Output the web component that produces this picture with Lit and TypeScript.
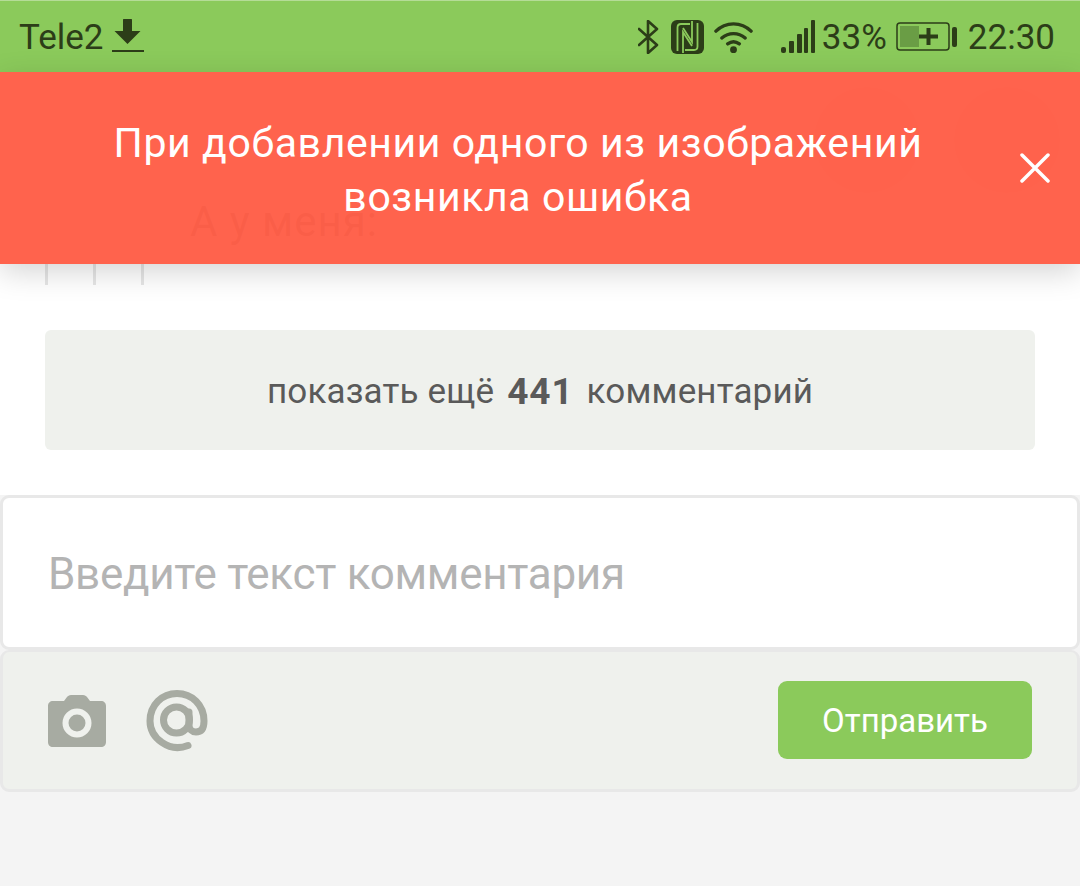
import { LitElement, html, css } from "lit";
import { customElement } from "lit/decorators.js";

@customElement("app-root")
export class AppRoot extends LitElement {
  static styles = css`
    :host { display: block; width: 1080px; height: 886px; position: relative; overflow: hidden; background: #f4f4f4; font-family: Roboto, "Noto Sans", sans-serif; }
    .status { height: 72px; box-sizing: border-box; background: #8bca5b; border-top: 1px solid #b5dc97; display: flex; align-items: center; padding: 1px 25px 0 19px; color: #2c3d18; font-size: 35px; }
    .status svg { display: block; flex: none; }
    .tele { margin-right: 7px; }
    .spacer { flex: 1; }
    .icons { display: flex; align-items: center; }
    .bt { margin-right: 12px; }
    .nfc { margin-right: 10px; }
    .wifi { margin-right: 28px; }
    .signal { margin-right: 7px; }
    .pct { margin-right: 9px; }
    .batt { margin-right: 11px; }
    .main { background: #fff; height: 423px; box-sizing: border-box; padding: 0 45px; display: flex; flex-direction: column; }
    .top { height: 192px; display: flex; align-items: flex-end; justify-content: space-between; }
    .who { margin-left: 145px; margin-bottom: 18px; font-size: 42px; letter-spacing: 1px; color: #333; }
    .avatars { display: flex; gap: 34px; align-self: flex-start; margin-top: 15px; margin-right: -25px; }
    .circle { width: 106px; height: 106px; border-radius: 50%; background: #d0b0a8; opacity: .5; }
    .ticks { display: flex; gap: 45px; height: 21px; }
    .ticks i { width: 3px; background: #e6e6e6; }
    .more { margin-top: 45px; height: 120px; box-sizing: border-box; padding-top: 2px; border-radius: 6px; background: #eff1ed; display: flex; align-items: center; justify-content: center; font-size: 35px; color: #5a5a5a; letter-spacing: .15px; }
    .more b { margin: 0 13px; font-weight: 700; font-size: 37px; letter-spacing: .9px; }
    .input { height: 155px; box-sizing: border-box; padding: 2px 0 0 45px; background: #fff; border: 3px solid #e8e8e8; border-radius: 9px; display: flex; align-items: center; font-size: 44px; color: #b4b4b4; letter-spacing: -.3px; }
    .tools { height: 142px; box-sizing: border-box; background: #eff1ed; border: 3px solid #e8e8e8; border-top-width: 2px; border-radius: 9px; display: flex; align-items: center; padding: 0 45px; }
    .tools svg { display: block; }
    .camera { margin-right: 40px; }
    .send { margin-left: auto; width: 254px; height: 78px; border-radius: 9px; background: #8bca5b; color: #fff; display: flex; align-items: center; justify-content: center; font-size: 33px; margin-top: -1px; }
    .banner { position: absolute; left: 0; right: 0; top: 72px; height: 192px; background: rgba(255, 95, 73, .975); box-shadow: 0 8px 28px rgba(0, 0, 0, .17); color: #fff; display: flex; align-items: center; }
    .msg { width: 1036px; text-align: center; font-size: 41px; line-height: 54px; letter-spacing: .6px; margin-top: 3px; }
    .close { display: block; position: absolute; left: 1020px; top: 81px; }
  `;

  render() {
    return html`
      <div class="status">
        <span class="tele">Tele2</span>
        <svg width="33" height="36" viewBox="0 0 33 36"><path d="M12 1.500a3 3 0 0 1 9 0V12h8.500L16.500 25 3.500 12H12z" fill="#2c3d18"/><rect x="1" y="31" width="32" height="2" fill="#2c3d18"/></svg>
        <span class="spacer"></span>
        <div class="icons">
          <svg class="bt" width="21" height="34" viewBox="0 0 21 34"><path d="M1 9l18 16-9 8V1l9 8L1 25" fill="none" stroke="#2c3d18" stroke-width="2.600" stroke-linejoin="round" stroke-linecap="round"/></svg>
          <svg class="nfc" width="33" height="34" viewBox="0 0 33 34"><rect width="33" height="34" rx="6" fill="#2c3d18"/><g fill="none" stroke="#8bca5b" stroke-width="1.800"><path d="M6.500 31V7.500C6.500 5.500 8 4 10 4h9"/><path d="M26.500 3v23.500c0 2-1.500 3.500-3.500 3.500h-9"/><path d="M12 33V12l9 14"/><path d="M21 1v21l-9-14"/></g></svg>
          <svg class="wifi" width="39" height="34" viewBox="0 0 40 34"><g fill="none" stroke="#2c3d18" stroke-width="3.500" stroke-linecap="round"><path d="M2 11C12 1 28 1 38 11"/><path d="M8 18c7-6 17-6 24 0"/><path d="M14 24c4-3 8-3 12 0"/></g><circle cx="20" cy="30" r="3.500" fill="#2c3d18"/></svg>
          <svg class="signal" width="34" height="34" viewBox="0 0 34 34"><g fill="#2c3d18"><rect x="0" y="27" width="5" height="6" rx="2"/><rect x="8" y="21" width="5" height="12" rx="1"/><rect x="16" y="14" width="5" height="19" rx="1"/><rect x="23" y="8" width="4" height="25" rx="1"/><rect x="30" y="0" width="4" height="33" rx="1"/></g></svg>
          <span class="pct">33%</span>
          <svg class="batt" width="61" height="30" viewBox="0 0 61 30"><rect x="1" y="1" width="52" height="27" rx="3" fill="none" stroke="#2c3d18" stroke-width="1.500"/><rect x="4" y="4" width="19" height="21" fill="#6a9d45"/><path d="M23 12.500h7.500V6h4v6.500H42v4h-7.500V23h-4v-6.500H23z" fill="#2c3d18"/><rect x="56" y="5" width="5" height="20" rx="2" fill="#2c3d18"/></svg>
          <span>22:30</span>
        </div>
      </div>
      <div class="main">
        <div class="top">
          <span class="who">А у меня:</span>
          <div class="avatars"><span class="circle"></span><span class="circle"></span></div>
        </div>
        <div class="ticks"><i></i><i></i><i></i></div>
        <div class="more">показать ещё <b>441</b> комментарий</div>
      </div>
      <div class="input">Введите текст комментария</div>
      <div class="tools">
        <svg class="camera" width="58" height="52" viewBox="0 0 58 52"><path d="M5 6h11l3-4c1-1 2-2 4-2h12c2 0 3 1 4 2l3 4h11c3 0 5 2 5 5v36c0 3-2 5-5 5H5c-3 0-5-2-5-5V11c0-3 2-5 5-5z" fill="#a7aba2"/><circle cx="29" cy="28" r="11.500" fill="none" stroke="#eff1ed" stroke-width="6"/></svg>
        <svg width="62" height="62" viewBox="0 0 62 62"><g fill="none" stroke="#a7aba2" stroke-width="7" stroke-linecap="round"><path d="M42 55.500C23 63 4 48 4 31 4 15 16 3.500 31 3.500S58 15 58 31c0 8-3 11-8 11-4 0-7-3-7-7V22"/><circle cx="30.500" cy="30" r="13"/></g></svg>
        <div class="send">Отправить</div>
      </div>
      <div class="banner">
        <div class="msg">При добавлении одного из изображений<br>возникла ошибка</div>
        <svg class="close" width="30" height="30" viewBox="0 0 30 30"><path d="M2 2l26 26M28 2L2 28" stroke="#fff" stroke-width="3.500" stroke-linecap="round"/></svg>
      </div>
    `;
  }
}
